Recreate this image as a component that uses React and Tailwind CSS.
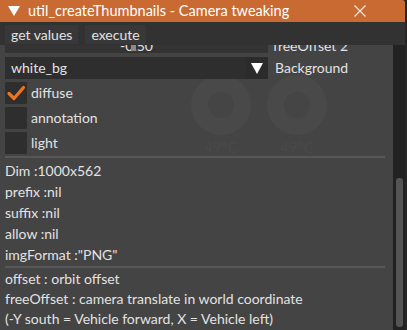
import React from "react";

const font = { fontFamily: 'Lato, "Noto Sans", sans-serif' };

function Check() {
  return (
    <svg width="22" height="22" viewBox="0 0 22 22">
      <path d="M4 11.5 L9 16.5 L18.5 5.5" fill="none" stroke="#f0731f" strokeWidth="3.2" strokeLinecap="round" strokeLinejoin="round" />
    </svg>
  );
}

function CheckRow({ label, checked }) {
  return (
    <div className="flex items-center h-[22px] gap-[4px]">
      <div className="w-[22px] h-[22px] bg-[#2e2e2e] rounded-[1px] flex items-center justify-center">
        {checked ? <Check /> : null}
      </div>
      <span>{label}</span>
    </div>
  );
}

export default function App() {
  return (
    <div className="w-[407px] h-[330px] bg-[#262626] overflow-hidden text-[14px] leading-none text-[#e2e2e2]" style={font}>
      <div className="w-[405px] h-[330px] flex flex-col bg-[#444444] rounded-tr-[3px] overflow-hidden">
        {/* title bar */}
        <div className="h-[22px] shrink-0 bg-[#c96a32] flex items-center text-white text-[14.5px]">
          <svg width="12" height="10" viewBox="0 0 12 10" className="ml-[8px]">
            <polygon points="0,0 12,0 6,10" fill="#ffffff" />
          </svg>
          <span className="ml-[8px]">util_createThumbnails - Camera tweaking</span>
          <svg width="12" height="12" viewBox="0 0 12 12" className="ml-auto mr-[39px]">
            <path d="M0.5 0.5 L11.5 11.5 M11.5 0.5 L0.5 11.5" stroke="#f4e3d8" strokeWidth="1.3" />
          </svg>
        </div>
        {/* menu bar */}
        <div className="h-[23px] shrink-0 bg-[#323232] flex items-end pb-[1px] pl-[5px] gap-[7px]">
          <div className="h-[19px] px-[6px] bg-[#383838] flex items-center">get values</div>
          <div className="h-[19px] px-[6px] bg-[#383838] flex items-center">execute</div>
        </div>
        {/* body */}
        <div className="flex-1 flex min-h-0">
          <div className="flex-1 relative overflow-hidden">
            {/* ghost of window behind */}
            <svg className="absolute left-[180px] top-[15px]" width="160" height="100" viewBox="0 0 160 100">
              <g fill="#484948">
                <circle cx="41" cy="45" r="30" />
                <circle cx="117" cy="45" r="30" />
              </g>
              <g fill="#454545">
                <circle cx="41" cy="45" r="13" />
                <circle cx="117" cy="45" r="13" />
              </g>
              <g fill="#494949" fontSize="15" fontFamily="Lato, sans-serif" textAnchor="middle">
                <text x="41" y="93">49°C</text>
                <text x="117" y="93">49°C</text>
              </g>
            </svg>
            <div className="relative flex flex-col px-[5px] mt-[-14px]">
              {/* slider row (scrolled) */}
              <div className="flex items-center h-[22px] gap-[5px]">
                <div className="w-[263px] h-[22px] bg-[#343434] flex items-center justify-center relative">
                  <span className="translate-y-[4px]">-0.50</span>
                  <div className="absolute left-[126px] top-[13px] w-[5px] h-[7px] bg-[#8a8a8a]" />
                </div>
                <span className="translate-y-[4px]">freeOffset 2</span>
              </div>
              {/* combo */}
              <div className="flex items-center h-[22px] gap-[7px] mt-[4px]">
                <div className="w-[263px] h-[22px] bg-[#2e2e2e] flex items-center">
                  <span className="pl-[6px] flex-1">white_bg</span>
                  <div className="w-[22px] h-[22px] bg-[#2b2b2b] flex items-center justify-center">
                    <svg width="12" height="11" viewBox="0 0 12 11">
                      <polygon points="0,0 12,0 6,11" fill="#ffffff" />
                    </svg>
                  </div>
                </div>
                <span>Background</span>
              </div>
              <div className="flex flex-col gap-[3px] mt-[3px]">
                <CheckRow label="diffuse" checked />
                <CheckRow label="annotation" />
                <CheckRow label="light" />
              </div>
              <div className="h-[2px] bg-[#575757] mt-[2px] mr-[3px]" />
              <div className="flex flex-col pt-[2px]">
                {["Dim :1000x562", "prefix :nil", "suffix :nil", "allow :nil", 'imgFormat :"PNG"'].map((t) => (
                  <div key={t} className="h-[21px] flex items-center">{t}</div>
                ))}
              </div>
              <div className="h-[2px] bg-[#575757] mt-[1px] mr-[3px]" />
              <div className="flex flex-col pt-[1px]">
                {[
                  "offset : orbit offset",
                  "freeOffset : camera translate in world coordinate",
                  "(-Y south = Vehicle forward, X = Vehicle left)",
                ].map((t) => (
                  <div key={t} className="h-[20px] flex items-center">{t}</div>
                ))}
              </div>
            </div>
          </div>
          {/* scrollbar */}
          <div className="w-[12px] bg-[#222222] flex flex-col pt-[133px] pb-[3px] items-center">
            <div className="w-[7px] flex-1 bg-[#545454] rounded-[3px]" />
          </div>
        </div>
      </div>
    </div>
  );
}
